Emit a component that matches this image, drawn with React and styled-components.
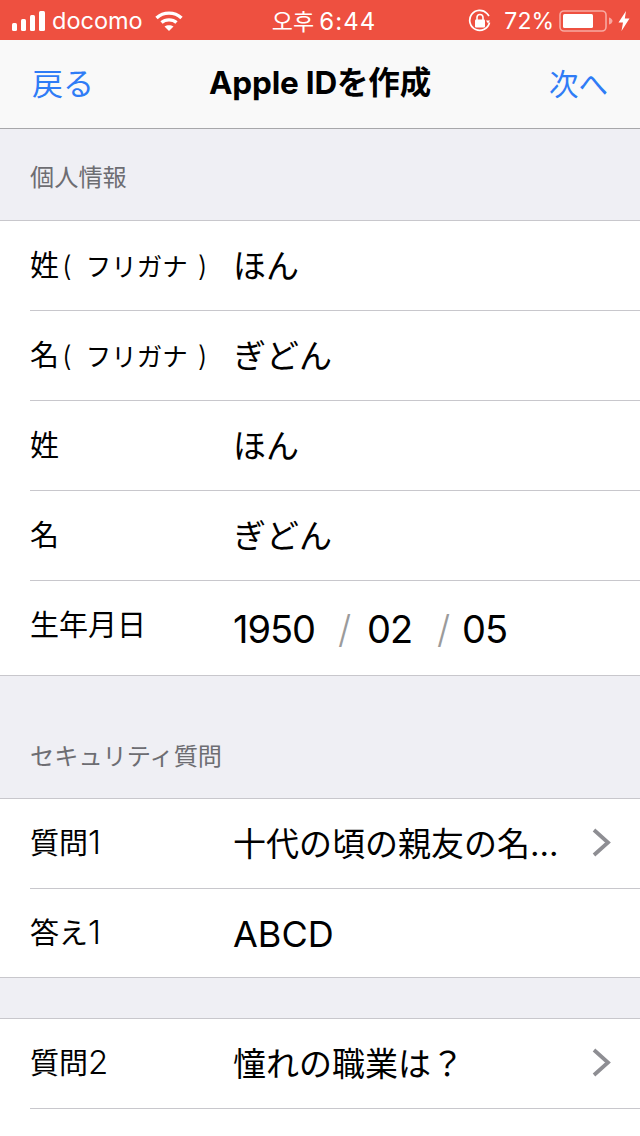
import React from 'react'
import styled, { createGlobalStyle } from 'styled-components'

const JP = `"Noto Sans CJK JP", "Liberation Sans", sans-serif`
const LATIN = `Inter, "Noto Sans CJK JP", sans-serif`

const Global = createGlobalStyle`
  html, body {
    margin: 0;
    padding: 0;
    background: #efeff4;
  }
  * {
    box-sizing: border-box;
  }
`

const Page = styled.div`
  width: 640px;
  height: 1136px;
  overflow: hidden;
  background: #efeff4;
  font-family: ${JP};
`

const StatusBar = styled.div`
  height: 40px;
  background: #ee5040;
  color: #fff;
  display: grid;
  grid-template-columns: 1fr auto 1fr;
  align-items: center;
  padding: 0 10px 0 12px;
`

const StatusLeft = styled.div`
  display: flex;
  align-items: center;
`

const StatusRight = styled.div`
  display: flex;
  align-items: center;
  justify-content: flex-end;
`

const Carrier = styled.span`
  font-family: ${LATIN};
  font-size: 23.5px;
  margin: 0 12px 0 7px;
  line-height: 40px;
`

const Clock = styled.span`
  font-family: "Noto Sans CJK KR", sans-serif;
  font-size: 23px;
  line-height: 40px;
  margin-left: 6px;
`

const ClockTime = styled.span`
  font-family: ${LATIN};
  font-size: 24px;
  letter-spacing: 1px;
`

const Percent = styled.span`
  font-family: ${LATIN};
  font-size: 23px;
  margin: 0 5px 0 12px;
  line-height: 40px;
`

const NavBar = styled.div`
  height: 89px;
  background: #f9f9f9;
  border-bottom: 1px solid #a7a7aa;
  display: grid;
  grid-template-columns: 1fr auto 1fr;
  align-items: center;
  padding: 0 32px;
`

const NavLink = styled.span`
  color: #2f7cf6;
  font-size: ${props => (props.right ? 29.5 : 31)}px;
  line-height: 88px;
  margin-top: -4px;
  text-align: ${props => (props.right ? 'right' : 'left')};
`

const NavTitle = styled.span`
  color: #000;
  font-size: 31.5px;
  font-weight: 700;
  line-height: 88px;
  margin-top: -2px;
  font-family: ${LATIN};
  letter-spacing: -0.2px;
`

const SectionHeader = styled.div`
  height: ${props => props.height}px;
  display: flex;
  align-items: flex-end;
  padding: 0 30px ${props => props.bottom}px;
  color: #6d6d72;
  font-size: 24.2px;
  line-height: 36px;
`

const Spacer = styled.div`
  height: ${props => props.height}px;
`

const Group = styled.div`
  background: #fff;
  border-top: 1px solid #c8c7cc;
  border-bottom: ${props => (props.open ? '0' : '1px solid #c8c7cc')};
`

const Row = styled.div`
  height: ${props => props.height || 90}px;
  margin-left: 30px;
  padding-right: 30px;
  display: flex;
  align-items: center;
  border-bottom: ${props => (props.last ? '0' : '1px solid #c8c7cc')};
`

const Label = styled.div`
  width: 204px;
  flex: none;
  color: #000;
  font-size: 29px;
  white-space: pre;
  font-family: ${LATIN};
  margin-top: ${props => props.shift || -5}px;
`

const Kana = styled.span`
  font-size: 25.5px;
`

const Paren = styled.span`
  font-size: 28px;
  font-weight: 300;
  margin: ${props => (props.close ? '0 0 0 10px' : '0 14px 0 3px')};
`

const Digit = styled.span`
  font-size: 33px;
  font-weight: 300;
`

const Value = styled.div`
  flex: 1;
  min-width: 0;
  margin-left: -1px;
  color: #000;
  font-size: ${props => props.size || 33}px;
  white-space: nowrap;
  font-family: ${LATIN};
  margin-top: ${props => props.shift || -4}px;
`

const DateValue = styled(Value)`
  display: flex;
  font-size: 38px;
  letter-spacing: -1px;
  margin-top: 2px;
`

const DatePart = styled.span`
  width: ${props => props.width}px;
`

const Slash = styled.span`
  width: ${props => props.width}px;
  color: #9b9b9b;
  font-weight: 300;
`

const SignalBars = () => (
  <svg width="33" height="20" viewBox="0 0 33 20" fill="#fff">
    <rect x="0" y="12" width="5" height="8" rx="1.5" />
    <rect x="9" y="8" width="5" height="12" rx="1.5" />
    <rect x="18" y="4" width="5" height="16" rx="1.5" />
    <rect x="27" y="0" width="6" height="20" rx="1.5" />
  </svg>
)

const Wifi = () => (
  <svg width="28" height="20" viewBox="0 0 28 20" fill="none" stroke="#fff" strokeWidth="3.4">
    <path d="M1.5 7 C8.5 0.5 19.5 0.5 26.5 7" />
    <path d="M6.5 11.5 C10.5 8 17.5 8 21.5 11.5" />
    <path d="M14 20 L9.5 15.5 C12 13.7 16 13.7 18.5 15.5 Z" fill="#fff" stroke="none" />
  </svg>
)

const RotationLock = () => (
  <svg width="24" height="24" viewBox="0 0 24 24" fill="none" stroke="#fff" strokeWidth="1.7">
    <path d="M21.5 13.5 A10 10 0 1 1 19 4.5 L21 7" />
    <path d="M18 11.5 L22 11.5 L20 14.5 Z" fill="#fff" stroke="none" />
    <rect x="7" y="10.5" width="10" height="8" rx="1" fill="#fff" stroke="none" />
    <path d="M9 11 V8.5 A3 3 0 0 1 15 8.5 V11" strokeWidth="1.6" />
  </svg>
)

const Battery = () => (
  <svg width="54" height="22" viewBox="0 0 54 22">
    <rect x="1" y="1" width="46" height="20" rx="4" fill="none" stroke="#f8a9a1" strokeWidth="1.6" />
    <rect x="4" y="4" width="30" height="14" rx="1.5" fill="#fff" />
    <path d="M50 7.5 C52 8 53.5 9.5 53.5 11 C53.5 12.5 52 14 50 14.5 Z" fill="#f8a9a1" />
  </svg>
)

const BoltIcon = styled.svg`
  margin-left: 5px;
`

const Bolt = () => (
  <BoltIcon width="12" height="20" viewBox="0 0 12 20" fill="#fff">
    <path d="M8 0 L0.5 11.5 H5 L3.5 20 L11.5 7.5 H6.8 Z" />
  </BoltIcon>
)

const ChevronIcon = styled.svg`
  flex: none;
  margin: -2px -1px 0 0;
`

const Chevron = () => (
  <ChevronIcon width="19" height="29" viewBox="0 0 19 29" fill="none" stroke="#8e8e93" strokeWidth="3.8">
    <path d="M2 2 L16 14.5 L2 27" />
  </ChevronIcon>
)

const personal = [
  { label: '姓', kana: true, value: 'ほん' },
  { label: '名', kana: true, value: 'ぎどん' },
  { label: '姓', value: 'ほん' },
  { label: '名', value: 'ぎどん' }
]

export default function App() {
  return (
    <Page>
      <Global />
      <StatusBar>
        <StatusLeft>
          <SignalBars />
          <Carrier>docomo</Carrier>
          <Wifi />
        </StatusLeft>
        <Clock>오후 <ClockTime>6:44</ClockTime></Clock>
        <StatusRight>
          <RotationLock />
          <Percent>72%</Percent>
          <Battery />
          <Bolt />
        </StatusRight>
      </StatusBar>
      <NavBar>
        <NavLink>戻る</NavLink>
        <NavTitle>Apple IDを作成</NavTitle>
        <NavLink right>次へ</NavLink>
      </NavBar>
      <SectionHeader height={91} bottom={26}>個人情報</SectionHeader>
      <Group>
        {personal.map(({ label, kana, value }, i) => (
          <Row key={i}>
            <Label>
              {label}
              {kana && <Kana><Paren>(</Paren>フリガナ<Paren close>)</Paren></Kana>}
            </Label>
            <Value>{value}</Value>
          </Row>
        ))}
        <Row height={94} last>
          <Label shift={-10}>生年月日</Label>
          <DateValue>
            <DatePart width={105}>1950</DatePart>
            <Slash width={29}>/</Slash>
            <DatePart width={70}>02</DatePart>
            <Slash width={25}>/</Slash>
            <DatePart width={50}>05</DatePart>
          </DateValue>
        </Row>
      </Group>
      <SectionHeader height={122} bottom={25}>セキュリティ質問</SectionHeader>
      <Group>
        <Row>
          <Label>質問<Digit>1</Digit></Label>
          <Value>十代の頃の親友の名...</Value>
          <Chevron />
        </Row>
        <Row height={88} last>
          <Label>答え<Digit>1</Digit></Label>
          <Value size={36} shift={1}>ABCD</Value>
        </Row>
      </Group>
      <Spacer height={40} />
      <Group open>
        <Row>
          <Label>質問<Digit>2</Digit></Label>
          <Value>憧れの職業は？</Value>
          <Chevron />
        </Row>
        <Row height={40} last />
      </Group>
    </Page>
  )
}
